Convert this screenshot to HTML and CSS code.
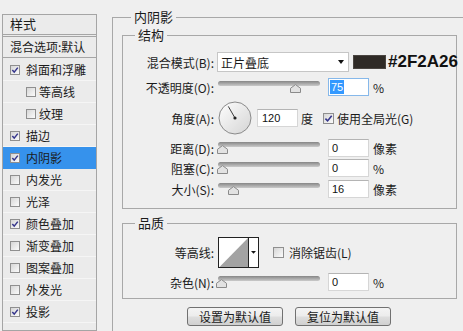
FILE: index.html
```html
<!DOCTYPE html>
<html lang="zh-CN">
<head>
<meta charset="utf-8">
<title>图层样式 - 内阴影</title>
<link rel="stylesheet" href="styles.css">
</head>
<body>
<div class="dialog">
  <aside class="fx-panel">
    <div class="fx-head">样式</div>
    <div class="fx-blend">混合选项:默认</div>
    <ul class="fx-list">
      <li class="fx-item"><span class="cb"><svg viewBox="0 0 8 8" width="8" height="8"><path d="M1.3 4.1 L3.2 6.1 L6.8 1.6" fill="none" stroke="#36368c" stroke-width="1.5"/></svg></span><span>斜面和浮雕</span></li>
      <li class="fx-item fx-sub"><span class="cb"></span><span>等高线</span></li>
      <li class="fx-item fx-sub"><span class="cb"></span><span>纹理</span></li>
      <li class="fx-item"><span class="cb"><svg viewBox="0 0 8 8" width="8" height="8"><path d="M1.3 4.1 L3.2 6.1 L6.8 1.6" fill="none" stroke="#36368c" stroke-width="1.5"/></svg></span><span>描边</span></li>
      <li class="fx-item is-active"><span class="cb"><svg viewBox="0 0 8 8" width="8" height="8"><path d="M1.3 4.1 L3.2 6.1 L6.8 1.6" fill="none" stroke="#36368c" stroke-width="1.5"/></svg></span><span>内阴影</span></li>
      <li class="fx-item"><span class="cb"></span><span>内发光</span></li>
      <li class="fx-item"><span class="cb"></span><span>光泽</span></li>
      <li class="fx-item"><span class="cb"><svg viewBox="0 0 8 8" width="8" height="8"><path d="M1.3 4.1 L3.2 6.1 L6.8 1.6" fill="none" stroke="#36368c" stroke-width="1.5"/></svg></span><span>颜色叠加</span></li>
      <li class="fx-item"><span class="cb"></span><span>渐变叠加</span></li>
      <li class="fx-item"><span class="cb"></span><span>图案叠加</span></li>
      <li class="fx-item"><span class="cb"></span><span>外发光</span></li>
      <li class="fx-item"><span class="cb"><svg viewBox="0 0 8 8" width="8" height="8"><path d="M1.3 4.1 L3.2 6.1 L6.8 1.6" fill="none" stroke="#36368c" stroke-width="1.5"/></svg></span><span>投影</span></li>
    </ul>
  </aside>

  <main class="main">
    <fieldset class="group outer">
      <legend>内阴影</legend>

      <fieldset class="group inner structure">
        <legend>结构</legend>

        <div class="row">
          <span class="lbl">混合模式(B):</span>
          <div class="select"><span>正片叠底</span><span class="caret"></span></div>
          <span class="swatch"></span>
          <span class="hex">#2F2A26</span>
        </div>

        <div class="row r-opacity">
          <span class="lbl">不透明度(O):</span>
          <div class="slider"><div class="track"></div><svg class="thumb" style="left:72px" width="11" height="9" viewBox="0 0 11 9"><path d="M0.5 8.5 V4.3 L5.5 0.6 L10.5 4.3 V8.5 Z" fill="#e2e2e2" stroke="#8a8a8a"/></svg></div>
          <div class="num num-focus"><span class="sel">75</span></div>
          <span class="unit">%</span>
        </div>

        <div class="row r-angle">
          <span class="lbl">角度(A):</span>
          <svg class="dial" width="34" height="34" viewBox="0 0 34 34">
            <defs><linearGradient id="dialg" x1="0" y1="0" x2="1" y2="1"><stop offset="0" stop-color="#fefefe"/><stop offset="1" stop-color="#d4d4d4"/></linearGradient></defs>
            <circle cx="17" cy="17" r="16" fill="url(#dialg)" stroke="#8a8a8a"/>
            <line x1="17" y1="17" x2="10.3" y2="5.4" stroke="#3a3a3a" stroke-width="1"/>
            <circle cx="17" cy="17" r="1.6" fill="#222"/>
          </svg>
          <div class="num num-angle">120</div>
          <span class="unit unit-deg">度</span>
          <span class="cb cb-lg cb-global"><svg viewBox="0 0 9 9" width="9" height="9"><path d="M1.4 4.6 L3.6 6.9 L7.7 1.8" fill="none" stroke="#36368c" stroke-width="1.6"/></svg></span>
          <span class="cb-text">使用全局光(G)</span>
        </div>

        <div class="row r-distance">
          <span class="lbl">距离(D):</span>
          <div class="slider"><div class="track"></div><svg class="thumb" style="left:-1px" width="11" height="9" viewBox="0 0 11 9"><path d="M0.5 8.5 V4.3 L5.5 0.6 L10.5 4.3 V8.5 Z" fill="#e2e2e2" stroke="#8a8a8a"/></svg></div>
          <div class="num">0</div>
          <span class="unit">像素</span>
        </div>

        <div class="row">
          <span class="lbl">阻塞(C):</span>
          <div class="slider"><div class="track"></div><svg class="thumb" style="left:-1px" width="11" height="9" viewBox="0 0 11 9"><path d="M0.5 8.5 V4.3 L5.5 0.6 L10.5 4.3 V8.5 Z" fill="#e2e2e2" stroke="#8a8a8a"/></svg></div>
          <div class="num">0</div>
          <span class="unit">%</span>
        </div>

        <div class="row r-size">
          <span class="lbl">大小(S):</span>
          <div class="slider"><div class="track"></div><svg class="thumb" style="left:10px" width="11" height="9" viewBox="0 0 11 9"><path d="M0.5 8.5 V4.3 L5.5 0.6 L10.5 4.3 V8.5 Z" fill="#e2e2e2" stroke="#8a8a8a"/></svg></div>
          <div class="num">16</div>
          <span class="unit">像素</span>
        </div>
      </fieldset>

      <fieldset class="group inner quality">
        <legend>品质</legend>

        <div class="row r-contour">
          <span class="lbl">等高线:</span>
          <svg class="contour" width="41" height="31" viewBox="0 0 41 31">
            <rect x="0.5" y="0.5" width="40" height="30" fill="#fff" stroke="#222"/>
            <polygon points="1.5,30 30,1 30,30" fill="#a3a3a3"/>
            <line x1="30.5" y1="0.5" x2="30.5" y2="30.5" stroke="#222"/>
            <polygon points="33,14 38,14 35.5,16.8" fill="#111"/>
          </svg>
          <span class="cb cb-lg cb-aa"></span>
          <span class="cb-text cb-text-aa">消除锯齿(L)</span>
        </div>

        <div class="row r-noise">
          <span class="lbl">杂色(N):</span>
          <div class="slider"><div class="track"></div><svg class="thumb" style="left:-2px" width="11" height="9" viewBox="0 0 11 9"><path d="M0.5 8.5 V4.3 L5.5 0.6 L10.5 4.3 V8.5 Z" fill="#e2e2e2" stroke="#8a8a8a"/></svg></div>
          <div class="num">0</div>
          <span class="unit">%</span>
        </div>
      </fieldset>

      <div class="btns">
        <button class="btn" type="button">设置为默认值</button>
        <button class="btn" type="button">复位为默认值</button>
      </div>
    </fieldset>
  </main>
</div>
</body>
</html>
```

FILE: styles.css
```css
html, body {
  margin: 0;
  padding: 0;
}

body {
  width: 463px;
  height: 331px;
  overflow: hidden;
  background: #efefef;
  font-family: "Noto Sans CJK SC", "Noto Sans", sans-serif;
  font-size: 12px;
  color: #1b1b1b;
}

.dialog {
  display: flex;
  align-items: flex-start;
  width: 463px;
  height: 331px;
  overflow: hidden;
}

/* ---------- left effects list ---------- */
.fx-panel {
  flex: none;
  width: 95px;
  height: 317px;
  margin: 14px 0 0 2px;
  box-sizing: border-box;
  border: 1px solid #a5a5a5;
  background: #ebebeb;
  overflow: hidden;
}

.fx-head {
  height: 19px;
  line-height: 17px;
  padding-left: 7px;
  font-size: 13px;
  border-bottom: 1px solid #a5a5a5;
}

.fx-blend {
  margin-top: 1px;
  height: 20px;
  line-height: 20px;
  padding-left: 7px;
  white-space: nowrap;
  border-top: 1px solid #a5a5a5;
  border-bottom: 1px solid #a5a5a5;
}

.fx-list {
  list-style: none;
  margin: 0;
  padding: 1px 0 0;
}

.fx-item {
  display: flex;
  align-items: center;
  gap: 6px;
  height: 22px;
  box-sizing: border-box;
  padding-left: 7px;
  border-bottom: 1px solid #f5f5f5;
  white-space: nowrap;
}

.fx-sub {
  padding-left: 23px;
  gap: 3px;
}

.fx-item.is-active {
  background: #3692ec;
  border-bottom-color: #3692ec;
}

/* checkbox */
.cb {
  flex: none;
  width: 10px;
  height: 10px;
  box-sizing: border-box;
  border: 1px solid #8f8f8f;
  background: linear-gradient(135deg, #d6d6d6, #fbfbfb);
  display: inline-flex;
  align-items: center;
  justify-content: center;
}

.cb svg {
  display: block;
}

.cb-lg {
  width: 11px;
  height: 11px;
}

/* ---------- main area ---------- */
.main {
  flex: 1 1 auto;
  min-width: 0;
  height: 331px;
  overflow: hidden;
}

.group {
  margin: 0;
  padding: 0;
  border: 1px solid #a8a8a8;
  min-width: 0;
}

.group > legend {
  padding: 0 3px;
  line-height: 14px;
  font-size: 13px;
}

.outer {
  margin: 10px 0 0 15px;
  width: 370px;
  height: 330px;
  box-sizing: border-box;
  padding: 4px 0 0 9px;
}

.outer > legend {
  margin-left: 9px;
}

.inner {
  width: 335px;
  box-sizing: border-box;
}

.inner > legend {
  margin-left: 12px;
}

.structure {
  padding: 10px 0 9px 0;
}

.quality {
  margin-top: 7px;
  padding: 7px 0 6px 0;
}

.row {
  display: flex;
  align-items: center;
  height: 20px;
  white-space: nowrap;
}

.lbl {
  flex: none;
  width: 91px;
  margin-right: 3px;
  text-align: right;
}

.r-opacity { margin-top: 5px; }
.r-angle { margin-top: 4px; height: 34px; }
.r-distance { margin-top: 3px; }
.r-size { margin-top: 1px; }
.r-contour { height: 31px; }
.r-noise { margin-top: 4px; }

/* select */
.select {
  flex: none;
  width: 132px;
  height: 20px;
  box-sizing: border-box;
  border: 1px solid #c6c6c6;
  background: #fff;
  display: flex;
  align-items: center;
  padding: 0 4px 0 3px;
}

.caret {
  margin-left: auto;
  width: 0;
  height: 0;
  border-left: 3.5px solid transparent;
  border-right: 3.5px solid transparent;
  border-top: 4px solid #111;
}

.swatch {
  flex: none;
  width: 33px;
  height: 14px;
  margin-left: 4px;
  box-sizing: border-box;
  background: #2f2a26;
  border: 1px solid #4a4541;
}

.hex {
  margin-left: 2px;
  font-family: "Liberation Sans", Arial, sans-serif;
  font-weight: bold;
  font-size: 17px;
  color: #111;
}

/* slider */
.slider {
  position: relative;
  flex: none;
  width: 102px;
  height: 12px;
  margin-left: 1px;
}

.track {
  height: 5px;
  border-radius: 3px;
  background: linear-gradient(#868686, #cacaca);
}

.thumb {
  position: absolute;
  top: 3px;
  display: block;
}

/* numeric fields */
.num {
  flex: none;
  width: 41px;
  height: 18px;
  margin-left: 8px;
  box-sizing: border-box;
  background: #fff;
  border: 1px solid #d6d6d6;
  border-top-color: #b4b4b4;
  padding-left: 3px;
  display: flex;
  align-items: center;
  font-family: "Liberation Sans", Arial, sans-serif;
  font-size: 11px;
  color: #111;
}

.num-focus {
  border-color: #86b8ea;
  padding-left: 1px;
}

.sel {
  background: #3399ff;
  color: #fff;
  padding: 1px 1px;
  line-height: 12px;
}

.unit {
  margin-left: 4px;
}

.dial {
  flex: none;
  display: block;
  margin-left: 1px;
}

.num-angle {
  margin-left: 5px;
  padding-left: 4px;
}

.unit-deg {
  margin-left: 3px;
}

.cb-global {
  margin-left: 10px;
}

.cb-text {
  margin-left: 3px;
}

.contour {
  flex: none;
  display: block;
  margin-left: 1px;
}

.cb-aa {
  margin-left: 14px;
}

.cb-text-aa {
  margin-left: 5px;
}

/* buttons */
.btns {
  display: flex;
  gap: 12px;
  margin: 8px 0 0 65px;
}

.btn {
  width: 96px;
  height: 19px;
  padding: 0;
  box-sizing: border-box;
  border: 1px solid #717171;
  border-radius: 3px;
  background: linear-gradient(#f4f4f4, #ececec 48%, #dedede 52%, #d0d0d0);
  font-family: "Noto Sans CJK SC", "Noto Sans", sans-serif;
  font-size: 12px;
  line-height: 17px;
  color: #1b1b1b;
}
```
